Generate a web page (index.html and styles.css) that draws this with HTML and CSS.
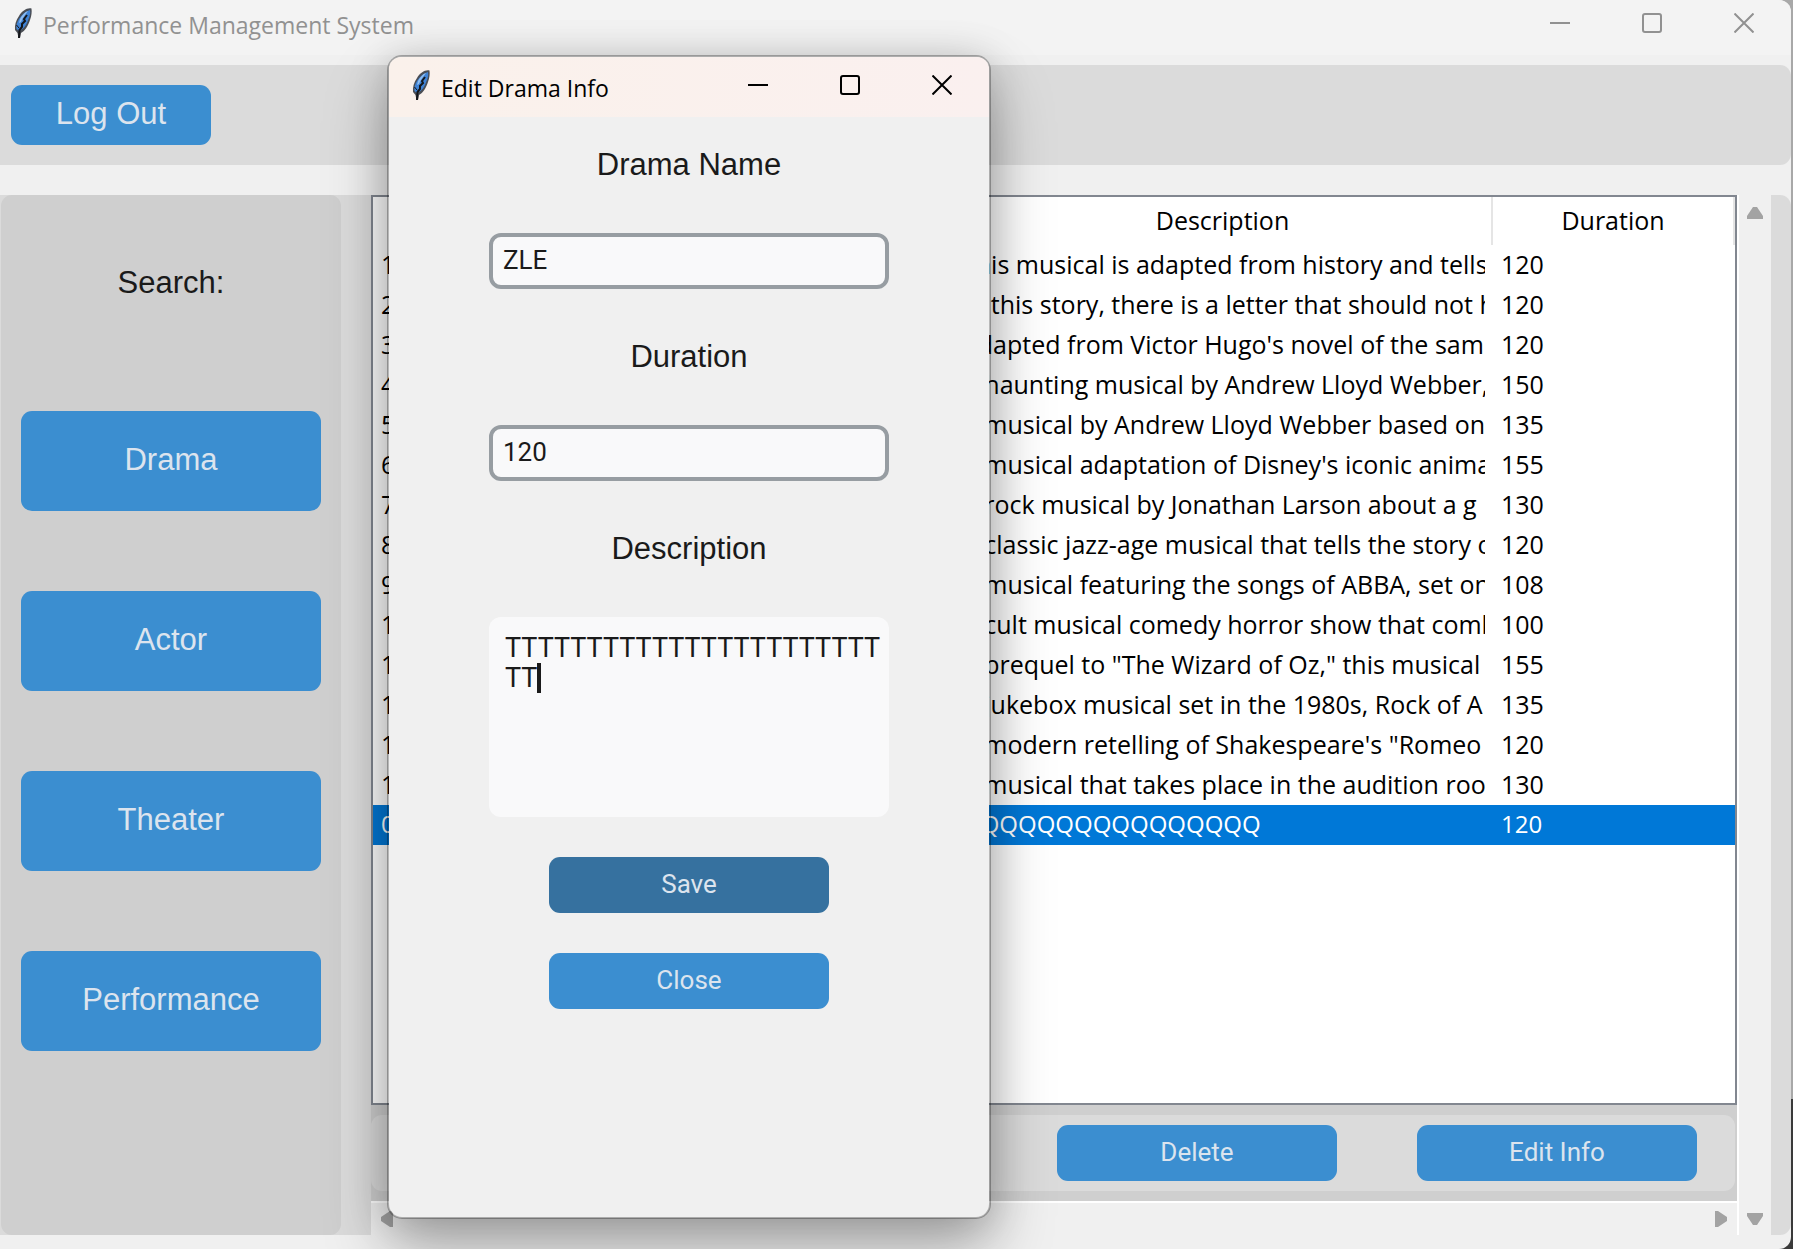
FILE: index.html
```html
<!DOCTYPE html>
<html lang="en">
<head>
<meta charset="utf-8">
<title>Performance Management System</title>
<link rel="stylesheet" href="styles.css">
</head>
<body>
<svg class="defs" width="0" height="0" aria-hidden="true">
  <symbol id="feather" viewBox="0 0 18 32">
    <path d="M17.500 1.500C13 0.500 8 4 5 9C2 13 0.500 18 1 23L3.500 26L4.500 31L6 31L7 26C11 24 14 19 16 13C17.500 9 18 5 17.500 1.500Z" fill="#4a4e55"/>
    <path d="M16 3C12 4 8 7 5 12C3 15 2 19 2.500 22L5 24C10 22 13 17 14.500 12C16 9 16.500 6 16 3Z" fill="#3f83d6"/>
    <path d="M14 4C11 5 8 8 6 12L5 16L7 15C9 10 12 7 14 4Z" fill="#8fbdf0"/>
    <path d="M13 8L10 12L11 14L8 17L8 20L5.500 23L5 31" fill="none" stroke="#14161a" stroke-width="2"/>
    <path d="M2.500 18L5 21" stroke="#14161a" stroke-width="1"/>
  </symbol>
  <symbol id="minimize" viewBox="0 0 20 20"><path d="M0 10H20" stroke="currentColor" stroke-width="2"/></symbol>
  <symbol id="maximize" viewBox="0 0 20 20"><rect x="1" y="1" width="18" height="18" rx="2" fill="none" stroke="currentColor" stroke-width="2"/></symbol>
  <symbol id="close" viewBox="0 0 20 20"><path d="M0.500 0.500L19.500 19.500M19.500 0.500L0.500 19.500" stroke="currentColor" stroke-width="2"/></symbol>
</svg>

<div class="window">
  <header class="titlebar">
    <svg class="feather"><use href="#feather"/></svg>
    <h1 class="title">Performance Management System</h1>
    <button class="control" aria-label="Minimize"><svg><use href="#minimize"/></svg></button>
    <button class="control" aria-label="Maximize"><svg><use href="#maximize"/></svg></button>
    <button class="control" aria-label="Close window"><svg><use href="#close"/></svg></button>
  </header>

  <div class="toolbar"><button class="btn btn-logout">Log Out</button></div>

  <main class="workspace">
    <div class="side-frame">
      <nav class="sidebar">
        <p class="heading">Search:</p>
        <button class="btn btn-nav">Drama</button>
        <button class="btn btn-nav">Actor</button>
        <button class="btn btn-nav">Theater</button>
        <button class="btn btn-nav">Performance</button>
      </nav>
    </div>

    <section class="content">
      <div class="table-box">
        <table class="dramas">
          <colgroup><col class="col-id"><col><col class="col-desc"><col class="col-dur"></colgroup>
          <thead><tr><th></th><th></th><th>Description</th><th>Duration</th></tr></thead>
          <tbody>
            <tr><td>1</td><td></td><td><div class="clip">This musical is adapted from history and tells</div></td><td>120</td></tr>
            <tr><td>2</td><td></td><td><div class="clip">In this story, there is a letter that should not h</div></td><td>120</td></tr>
            <tr><td>3</td><td></td><td><div class="clip">Adapted from Victor Hugo's novel of the sam</div></td><td>120</td></tr>
            <tr><td>4</td><td></td><td><div class="clip">A haunting musical by Andrew Lloyd Webber,</div></td><td>150</td></tr>
            <tr><td>5</td><td></td><td><div class="clip">A musical by Andrew Lloyd Webber based on</div></td><td>135</td></tr>
            <tr><td>6</td><td></td><td><div class="clip">A musical adaptation of Disney's iconic anima</div></td><td>155</td></tr>
            <tr><td>7</td><td></td><td><div class="clip">A rock musical by Jonathan Larson about a g</div></td><td>130</td></tr>
            <tr><td>8</td><td></td><td><div class="clip">A classic jazz-age musical that tells the story o</div></td><td>120</td></tr>
            <tr><td>9</td><td></td><td><div class="clip">A musical featuring the songs of ABBA, set on</div></td><td>108</td></tr>
            <tr><td>10</td><td></td><td><div class="clip">A cult musical comedy horror show that comb</div></td><td>100</td></tr>
            <tr><td>11</td><td></td><td><div class="clip">A prequel to "The Wizard of Oz," this musical</div></td><td>155</td></tr>
            <tr><td>12</td><td></td><td><div class="clip">A jukebox musical set in the 1980s, Rock of A</div></td><td>135</td></tr>
            <tr><td>13</td><td></td><td><div class="clip">A modern retelling of Shakespeare's "Romeo</div></td><td>120</td></tr>
            <tr><td>14</td><td></td><td><div class="clip">A musical that takes place in the audition roo</div></td><td>130</td></tr>
            <tr class="selected"><td>0</td><td></td><td><div class="clip">QQQQQQQQQQQQQQQQ</div></td><td>120</td></tr>
          </tbody>
        </table>
      </div>
      <div class="actions">
        <div class="actions-inner">
          <button class="btn btn-small">Delete</button>
          <button class="btn btn-small">Edit Info</button>
        </div>
      </div>
      <div class="hscroll">
        <svg width="12" height="16"><path d="M12 0V16H9L0 10V6L9 0Z" fill="#a3a3a3"/></svg>
        <svg width="12" height="16"><path d="M0 0V16H3L12 10V6L3 0Z" fill="#a3a3a3"/></svg>
      </div>
    </section>

    <div class="vscroll">
      <svg width="16" height="12"><path d="M0 12H16V9L10 0H6L0 9Z" fill="#a3a3a3"/></svg>
      <svg width="16" height="12"><path d="M0 0H16V3L10 12H6L0 3Z" fill="#a3a3a3"/></svg>
    </div>
    <div class="edge"></div>
  </main>
</div>

<div class="dialog" role="dialog" aria-labelledby="dialog-title">
  <header class="titlebar titlebar-active">
    <svg class="feather"><use href="#feather"/></svg>
    <h2 class="title" id="dialog-title">Edit Drama Info</h2>
    <button class="control" aria-label="Minimize"><svg><use href="#minimize"/></svg></button>
    <button class="control" aria-label="Maximize"><svg><use href="#maximize"/></svg></button>
    <button class="control" aria-label="Close window"><svg><use href="#close"/></svg></button>
  </header>
  <form class="form">
    <label class="heading" for="name">Drama Name</label>
    <input class="field" id="name" type="text" value="ZLE">
    <label class="heading" for="duration">Duration</label>
    <input class="field" id="duration" type="text" value="120">
    <label class="heading" for="description">Description</label>
    <div class="memo-box">
      <textarea class="memo" id="description" spellcheck="false">TTTTTTTTTTTTTTTTTTTTTTTTT</textarea>
      <span class="caret"></span>
    </div>
    <button class="btn btn-small btn-hover" type="button">Save</button>
    <button class="btn btn-small" type="button">Close</button>
  </form>
</div>
</body>
</html>
```

FILE: styles.css
```css
* { box-sizing: border-box; }

body {
  margin: 0;
  height: 100vh;
  padding-right: 2px;
  overflow: hidden;
  position: relative;
  background: linear-gradient(#a8a8a8 88%, #3a3a3a 88%);
  font-family: "Open Sans", "Noto Sans", sans-serif;
  color: #000;
}

h1, h2, p { margin: 0; font-weight: 400; }
.defs { position: absolute; }

.window {
  height: 100%;
  display: flex;
  flex-direction: column;
  background: #f0f0f0;
  border-radius: 0 12px 12px 0;
  overflow: hidden;
}

/* Title bars */
.titlebar {
  flex: none;
  height: 55px;
  padding: 0 1px 10px 14px;
  display: flex;
  align-items: center;
  background: #f3f3f3;
  color: #919191;
}
.titlebar-active {
  height: 60px;
  padding: 0 1px 4px 23px;
  background: linear-gradient(90deg, #faf1eb, #faf0ef);
  border-radius: 12px 12px 0 0;
  color: #000;
}
.feather { width: 18px; height: 32px; flex: none; }
.title {
  flex: 1;
  padding: 5px 0 0 11px;
  font-size: 23px;
  line-height: 32px;
  white-space: nowrap;
}
.control {
  width: 92px;
  height: 45px;
  padding: 0;
  border: 0;
  background: none;
  color: inherit;
  display: grid;
  place-items: center;
}
.control svg { width: 20px; height: 20px; }

/* Shared controls */
.btn {
  border: 0;
  padding: 0 0 3px;
  border-radius: 11px;
  background: #3b8ed0;
  color: #dce4ee;
  font: 31px/36px "Liberation Sans", Arial, sans-serif;
}
.btn-logout { width: 200px; height: 60px; }
.btn-nav { width: 300px; height: 100px; }
.btn-small {
  width: 280px;
  height: 56px;
  font: 26px/30px Roboto, sans-serif;
}
.btn-hover { background: #36719f; }
.heading {
  font: 31px/56px "Liberation Sans", Arial, sans-serif;
  color: #1a1a1a;
  text-align: center;
}

.toolbar {
  flex: none;
  height: 100px;
  margin: 10px 0 30px;
  padding: 0 11px;
  display: flex;
  align-items: center;
  background: #dbdbdb;
  border-radius: 0 11px 11px 0;
}

/* Workspace */
.workspace {
  flex: 1;
  min-height: 0;
  margin-bottom: 14px;
  display: flex;
}
.side-frame {
  flex: none;
  width: 371px;
  padding: 0 30px 0 1px;
  background: #dbdbdb;
}
.sidebar {
  height: 100%;
  padding-top: 60px;
  display: flex;
  flex-direction: column;
  align-items: center;
  gap: 80px;
  background: #cfcfcf;
  border-radius: 11px;
}
.sidebar .heading { margin-bottom: 20px; }

.content {
  flex: 1;
  min-width: 0;
  display: flex;
  flex-direction: column;
}
.table-box {
  flex: 1;
  min-height: 0;
  overflow: hidden;
  border: 2px solid #828790;
  background: #fff;
}
.dramas {
  width: 100%;
  table-layout: fixed;
  border-collapse: separate;
  border-spacing: 0;
  font-size: 25px;
  line-height: 32px;
}
.col-id { width: 200px; }
.col-desc { width: 539px; }
.col-dur { width: 242px; }
.dramas th {
  height: 48px;
  padding: 0 0 2px;
  font-weight: 400;
  border-right: 2px solid #e5e5e5;
}
.dramas td {
  height: 40px;
  padding: 0 8px 2px;
  white-space: nowrap;
}
.clip { overflow: hidden; }
.selected { background: #0078d7; color: #fff; font-size: 24px; }

.actions {
  flex: none;
  padding: 10px 2px 10px 0;
  background: #cfcfcf;
}
.actions-inner {
  height: 76px;
  padding-right: 38px;
  display: flex;
  justify-content: flex-end;
  align-items: center;
  gap: 80px;
  background: #dbdbdb;
  border-radius: 11px;
}
.hscroll {
  flex: none;
  height: 34px;
  padding: 0 10px;
  display: flex;
  justify-content: space-between;
  align-items: center;
  border-top: 2px solid #fff;
}
.vscroll {
  flex: none;
  width: 34px;
  padding: 12px 0 10px;
  display: flex;
  flex-direction: column;
  justify-content: space-between;
  align-items: center;
  border-left: 2px solid #fff;
}
.edge {
  flex: none;
  width: 20px;
  background: #dbdbdb;
  border-radius: 0 11px 11px 0;
}

/* Edit dialog, floating over the main window */
.dialog {
  position: absolute;
  left: 387px;
  top: 55px;
  width: 604px;
  height: 1164px;
  border: 2px solid rgba(0, 0, 0, 0.28);
  border-radius: 15px;
  background: #f0f0f0;
  background-clip: padding-box;
  box-shadow: 0 32px 64px rgba(0, 0, 0, 0.28), 0 4px 40px rgba(0, 0, 0, 0.18);
}
.form {
  padding: 20px 100px;
  display: flex;
  flex-direction: column;
  align-items: center;
  gap: 40px;
}
.field {
  width: 100%;
  height: 56px;
  padding: 0 10px 2px;
  border: 4px solid #979da2;
  border-radius: 12px;
  background: #f9f9fa;
  color: #1a1a1a;
  font: 26px/30px Roboto, sans-serif;
}
.memo-box {
  position: relative;
  width: 100%;
  height: 200px;
}
.memo {
  display: block;
  width: 100%;
  height: 100%;
  padding: 16px 6px 16px 16px;
  border: 0;
  border-radius: 12px;
  background: #f9f9fa;
  color: #1a1a1a;
  font: 27px/30px Roboto, sans-serif;
  word-break: break-all;
  resize: none;
  overflow: hidden;
}
.caret {
  position: absolute;
  left: 48px;
  top: 46px;
  width: 4px;
  height: 30px;
  background: #1a1a1a;
}
```
